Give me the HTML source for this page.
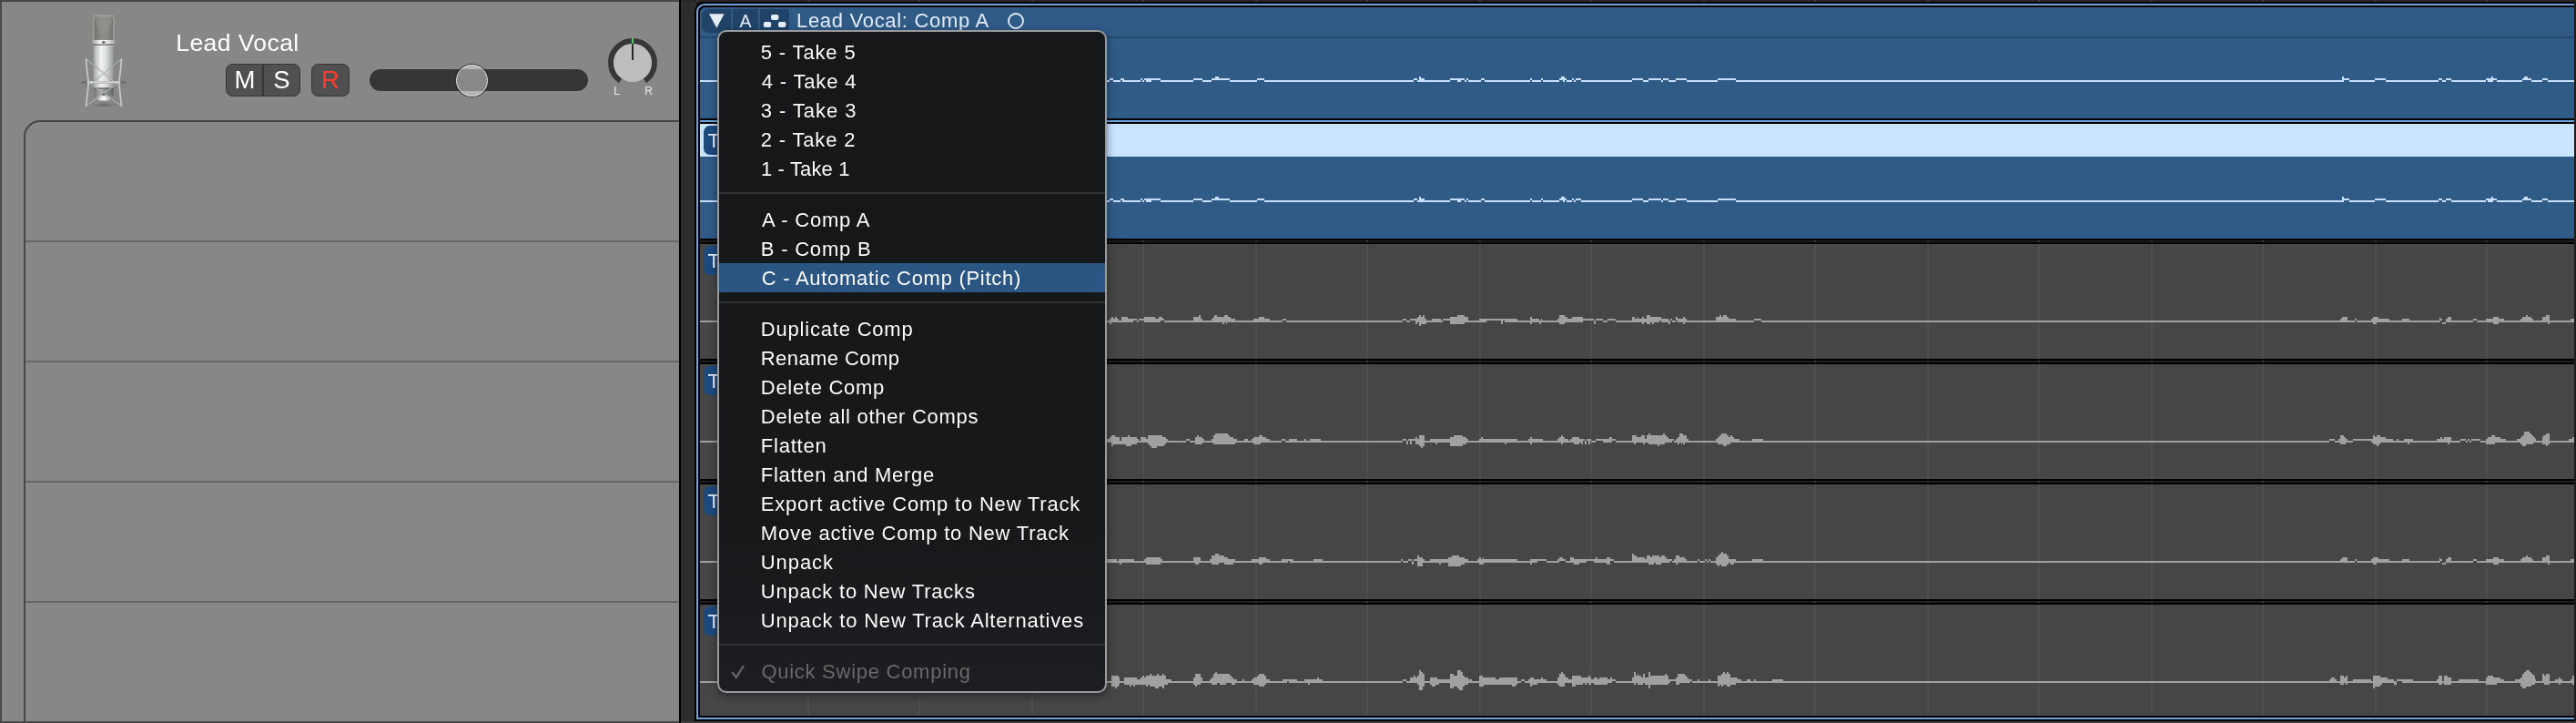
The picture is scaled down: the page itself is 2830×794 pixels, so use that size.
<!DOCTYPE html>
<html lang="en">
<head>
<meta charset="utf-8">
<title>Lead Vocal: Comp A</title>
<style>
*{box-sizing:border-box;margin:0;padding:0}
html,body{width:2830px;height:794px;overflow:hidden;background:#1c1c1c}
body{position:relative;will-change:transform;font-family:"Liberation Sans","DejaVu Sans",sans-serif;color:#fff}
#left{position:absolute;left:0;top:0;width:746px;height:794px;background:#878787;overflow:hidden}
#left .edgeT{position:absolute;left:0;top:0;width:746px;height:2px;background:#484848}
#left .edgeL{position:absolute;left:0;top:0;width:2px;height:794px;background:#494949}
#left .edgeB{position:absolute;left:0;top:792px;width:746px;height:2px;background:#494949}
#box{position:absolute;left:26px;top:132px;width:760px;height:700px;border:2px solid #464646;border-radius:18px 0 0 0}
.hl{position:absolute;left:28px;width:718px;height:2px;background:#676767}
#name{position:absolute;left:193.3px;top:30px;font-size:26.5px;line-height:34px;letter-spacing:.42px;color:#fff;white-space:nowrap}
.btn{position:absolute;top:70px;height:36px;background:#505050;border:1.5px solid #363636;border-radius:7.5px;font-size:27.5px;line-height:34.4px;text-align:center;color:#fff}
#ms{left:248px;width:82px}
#ms span{position:absolute;top:0;height:33px;line-height:34.4px;text-align:center}
#ms .m{left:0;width:40px}
#ms .s{left:41px;width:39px}
#ms i{position:absolute;left:39px;top:-1px;width:2px;height:35px;background:#363636}
#rec{left:342px;width:42px;color:#ff3b30}
#track{position:absolute;left:406px;top:76px;width:240px;height:24px;border-radius:12px;background:#343734}
#thumb{position:absolute;left:500.5px;top:70.5px;width:35px;height:35px;border-radius:50%;border:1.5px solid #e2e2e2;box-shadow:0 0 0 1px rgba(45,45,45,.85);background:linear-gradient(#b5b5b5 0,#b5b5b5 4.5px,#868988 4.5px,#868988 28.5px,#b5b5b5 28.5px)}
#knob{position:absolute;left:664px;top:38px;width:62px;height:80px}
#mic{position:absolute;left:84px;top:12px;width:60px;height:112px}
#div{position:absolute;left:746px;top:0;width:19px;height:794px;background:#2c2c2c;border-left:2px solid #000}
#topstrip{position:absolute;left:748px;top:0;width:2082px;height:2px;background:#262626}
#botstrip{position:absolute;left:748px;top:792px;width:2082px;height:2px;background:#3a3a3a}
#sel{position:absolute;left:763px;top:2px;width:2065px;height:790px;background:#000;border-radius:11px 0 0 0}
#selb{position:absolute;left:765px;top:4px;width:2063px;height:786px;border:2px solid #6fa3dd;border-right:0;border-radius:9px 0 0 0}
#selm{position:absolute;left:769px;top:132px;width:2059px;height:2px;background:#6fa3dd}
.row{position:absolute;left:769px;width:2059px;overflow:hidden}
.blue{background:#305b87}
.gray{background:#464646}
.sepd{position:absolute;left:769px;width:2059px;height:2px;background:#1e1e1e}
.tb{position:absolute;left:4px;top:2px;width:40px;height:32px;border-radius:7px;background:#1c4a7e;color:#e9f1fb;font-size:22px;line-height:33.6px;padding-left:4.6px;overflow:hidden}
.row svg{position:absolute;left:0;top:0}
#hdr{position:absolute;left:0;top:0;width:100%;height:32px}
#hsep{position:absolute;left:0;top:32px;width:100%;height:2px;background:#28496d}
#grp{position:absolute;left:2px;top:2px;width:96px;height:26px;background:#204367;border-radius:8px 3px 3px 8px}
#grp i{position:absolute;top:0;width:2px;height:26px;background:#2f5a87}
#title{position:absolute;left:106px;top:0;height:32px;line-height:29px;font-size:22px;letter-spacing:.7px;color:#e3edf9;white-space:nowrap}
#ga{position:absolute;left:34px;top:0;width:28px;text-align:center;font-size:19.5px;line-height:27px;color:#e3edf9}
#pale{position:absolute;left:0;top:0;width:100%;height:36px;background:#c9e4ff}
#menu{position:absolute;left:788px;top:33px;width:428px;height:728px;border:2px solid #979a9f;border-radius:10px;background:linear-gradient(#161718 0,#17181a 75%,#1c1e21 100%);overflow:hidden;font-size:22px;letter-spacing:.8px;color:#fbfbfb;box-shadow:0 3px 10px rgba(0,0,0,.45)}
#menu .it{position:absolute;left:0;width:424px;height:32px;line-height:34px;padding-left:46px;white-space:nowrap}
#menu .sep{position:absolute;left:0;width:424px;height:2px;background:#303133}
#menu .hi{background:#2b5583}
#menu .dis{color:#696969}
#menu svg{position:absolute}
</style>
</head>
<body>
<div id="left">
<div id="box"></div>
<div class="hl" style="top:264px"></div>
<div class="hl" style="top:396px"></div>
<div class="hl" style="top:528px"></div>
<div class="hl" style="top:660px"></div>
<div class="edgeT"></div><div class="edgeL"></div><div class="edgeB"></div>
<svg id="mic" width="60" height="112" viewBox="84 12 60 112">
<defs>
<linearGradient id="mg1" x1="0" y1="0" x2="1" y2="0"><stop offset="0" stop-color="#858a85"/><stop offset=".12" stop-color="#b9beb9"/><stop offset=".38" stop-color="#f1f4f1"/><stop offset=".62" stop-color="#d9ddd9"/><stop offset=".88" stop-color="#a3a8a3"/><stop offset="1" stop-color="#7f847f"/></linearGradient>
<linearGradient id="mg2" x1="0" y1="0" x2="1" y2="0"><stop offset="0" stop-color="#73736e"/><stop offset=".3" stop-color="#878781"/><stop offset=".5" stop-color="#8d8d87"/><stop offset=".7" stop-color="#878781"/><stop offset="1" stop-color="#747470"/></linearGradient>
<linearGradient id="mg3" x1="0" y1="0" x2="1" y2="0"><stop offset="0" stop-color="#9ea39e"/><stop offset=".3" stop-color="#e9ece9"/><stop offset=".55" stop-color="#f6f8f6"/><stop offset="1" stop-color="#a9aea9"/></linearGradient>
<linearGradient id="mg4" x1="0" y1="0" x2="1" y2="0"><stop offset="0" stop-color="#6f746f"/><stop offset=".35" stop-color="#aeb3ae"/><stop offset=".6" stop-color="#8e938e"/><stop offset="1" stop-color="#646964"/></linearGradient>
<radialGradient id="msh" cx=".5" cy=".5" r=".5"><stop offset="0" stop-color="#5f5f5f" stop-opacity=".9"/><stop offset="1" stop-color="#6a6a6a" stop-opacity="0"/></radialGradient>
</defs>
<ellipse cx="114" cy="115.4" rx="14" ry="2.6" fill="url(#msh)"/>
<rect x="101.8" y="50" width="24.2" height="46.5" fill="url(#mg1)"/>
<path d="M103.2 96.5h21.6v6.5q0 2.5-2.5 2.5h-16.6q-2.5 0-2.5-2.5z" fill="url(#mg4)"/>
<rect x="103.2" y="96.5" width="21.6" height="1.4" fill="#4d524d" opacity=".6"/>
<path d="M106.5 105.3h14.4v3.2q0 2-2 2h-10.4q-2 0-2-2z" fill="url(#mg3)"/>
<rect x="102.9" y="17.2" width="22" height="27.2" rx="1.4" fill="url(#mg2)" stroke="#c4c4bc" stroke-opacity=".75" stroke-width=".9"/>
<path d="M103.4 18l5.4 18h10l5.4-18z" fill="#94948d" opacity=".5"/>
<rect x="101.2" y="44" width="24.8" height="6.8" rx="1" fill="url(#mg3)"/>
<rect x="101.6" y="48.6" width="24" height="1" fill="#3c403c"/>
<ellipse cx="113.8" cy="46.4" rx="1.8" ry="1.2" fill="#4a4e52"/>
<g fill="none" stroke-linecap="round">
<path d="M94.6 64.8L125.5 90M133.4 64.8L102.5 90" stroke="#5d615d" stroke-width="2" opacity=".35"/><path d="M94.6 64.8L125.5 90M133.4 64.8L102.5 90" stroke="#d0d4d0" stroke-width="1" opacity=".9"/>
<path d="M97.6 90.8L133.4 116.4M130.4 90.8L94.6 116.4" stroke="#5d615d" stroke-width="2" opacity=".35"/><path d="M97.6 90.8L133.4 116.4M130.4 90.8L94.6 116.4" stroke="#d0d4d0" stroke-width="1" opacity=".9"/>
<path d="M90.8 90.4H137.2" stroke="#6d6f6d" stroke-width="2.6"/>
<path d="M96.5 90.4H131.5" stroke="#d9ddd9" stroke-width="2.2"/>
<path d="M94.6 64.8Q95.2 78 97.4 90.4Q96 104 94.6 116.4" stroke="#c6cac6" stroke-width="1.7"/>
<path d="M133.4 64.8Q132.8 78 130.6 90.4Q132 104 133.4 116.4" stroke="#c6cac6" stroke-width="1.7"/>
</g>
<circle cx="113.9" cy="103.6" r="1.2" fill="#4a4e4a"/>
</svg>

<div id="name">Lead Vocal</div>
<div class="btn" id="ms"><span class="m">M</span><i></i><span class="s">S</span></div>
<div class="btn" id="rec">R</div>
<div id="track"></div>
<div id="thumb"></div>
<svg id="knob" viewBox="0 0 62 80" width="62" height="80">
<path d="M17.5 50.8A24 24 0 1 1 44.5 50.8" fill="none" stroke="#373737" stroke-width="6"/>
<circle cx="31" cy="31" r="21" fill="#bdbdbd"/>
<rect x="30" y="8" width="2" height="20" fill="#2a2a2a"/>
<rect x="30" y="4" width="2" height="6" fill="#3bd15a"/>
<text x="10.2" y="65.8" font-size="12" fill="#ececec">L</text>
<text x="44.2" y="65.8" font-size="12" fill="#ececec">R</text>
</svg>
</div>
<div id="div"></div>
<div id="topstrip"></div>
<div id="botstrip"></div>
<div id="sel"></div>
<div id="selb"></div>
<div class="row blue" style="top:8px;height:122px;border-radius:6px 0 0 0"><svg width="2059" height="122" viewBox="0 0 2059 122" shape-rendering="crispEdges"><path fill="#c6dffc" d="M0 80h450v2h-450zM450 78h4v2h-4zM454 80h8v2h-8zM462 78h2v2h-2zM464 78h2v4h-2zM466 80h18v2h-18zM484 78h2v2h-2zM486 80h2v2h-2zM488 78h2v2h-2zM490 78h6v4h-6zM496 78h10v2h-10zM506 80h36v2h-36zM542 78h10v2h-10zM552 80h10v2h-10zM562 78h4v2h-4zM566 76h4v4h-4zM570 78h12v2h-12zM582 80h30v2h-30zM612 78h8v2h-8zM620 80h164v2h-164zM784 78h4v2h-4zM788 80h2v2h-2zM790 76h2v6h-2zM792 78h4v4h-4zM796 80h28v2h-28zM824 78h8v2h-8zM832 78h4v4h-4zM836 78h4v2h-4zM840 80h2v2h-2zM842 78h2v2h-2zM844 80h14v2h-14zM858 78h4v2h-4zM862 80h50v2h-50zM912 78h2v2h-2zM914 80h10v2h-10zM924 78h2v2h-2zM926 80h18v2h-18zM944 78h2v2h-2zM946 76h2v4h-2zM948 76h2v6h-2zM950 78h2v2h-2zM952 80h6v2h-6zM958 78h2v2h-2zM960 80h2v2h-2zM962 78h6v2h-6zM968 80h56v2h-56zM1024 78h12v2h-12zM1036 80h6v2h-6zM1042 78h14v2h-14zM1056 80h2v2h-2zM1058 78h6v2h-6zM1064 80h8v2h-8zM1072 78h12v2h-12zM1084 80h34v2h-34zM1118 78h20v2h-20zM1138 80h666v2h-666zM1804 76h2v6h-2zM1806 78h6v2h-6zM1812 80h28v2h-28zM1840 78h12v2h-12zM1852 80h58v2h-58zM1910 78h4v2h-4zM1914 80h4v2h-4zM1918 78h6v2h-6zM1924 80h38v2h-38zM1962 78h2v2h-2zM1964 78h4v4h-4zM1968 76h2v6h-2zM1970 78h4v2h-4zM1974 80h28v2h-28zM2002 78h2v2h-2zM2004 76h4v4h-4zM2008 78h4v2h-4zM2012 80h12v2h-12zM2024 78h6v2h-6zM2030 80h29v2h-29z"/></svg>
<div id="hdr"><div id="grp"><i style="left:32px"></i><i style="left:62px"></i>
<svg width="96" height="30" viewBox="0 0 96 30" style="position:absolute;left:0;top:0"><path fill="#e6eef9" d="M8 5.2h16.6l-8.3 15.6z"/><rect x="76" y="6" width="8.4" height="6" rx="2" fill="#e6eef9"/><rect x="67.8" y="14" width="8.4" height="6" rx="2" fill="#e6eef9"/><rect x="84" y="14" width="8.4" height="6" rx="2" fill="#e6eef9"/></svg>
<div id="ga">A</div></div>
<div id="title">Lead Vocal: Comp A</div>
<svg width="24" height="24" viewBox="0 0 24 24" style="position:absolute;left:335px;top:3px"><circle cx="12" cy="12" r="8" fill="none" stroke="#e3edf9" stroke-width="1.8"/></svg>
</div><div id="hsep"></div></div>
<div id="selm"></div>
<div class="row blue" style="top:136px;height:126px"><svg width="2059" height="126" viewBox="0 0 2059 126" shape-rendering="crispEdges"><path fill="#c6dffc" d="M0 84h450v2h-450zM450 82h4v2h-4zM454 84h8v2h-8zM462 82h2v2h-2zM464 82h2v4h-2zM466 84h18v2h-18zM484 82h2v2h-2zM486 84h2v2h-2zM488 82h2v2h-2zM490 82h6v4h-6zM496 82h10v2h-10zM506 84h36v2h-36zM542 82h10v2h-10zM552 84h10v2h-10zM562 82h4v2h-4zM566 80h4v4h-4zM570 82h12v2h-12zM582 84h30v2h-30zM612 82h8v2h-8zM620 84h164v2h-164zM784 82h4v2h-4zM788 84h2v2h-2zM790 80h2v6h-2zM792 82h4v4h-4zM796 84h28v2h-28zM824 82h8v2h-8zM832 82h4v4h-4zM836 82h4v2h-4zM840 84h2v2h-2zM842 82h2v2h-2zM844 84h14v2h-14zM858 82h4v2h-4zM862 84h50v2h-50zM912 82h2v2h-2zM914 84h10v2h-10zM924 82h2v2h-2zM926 84h18v2h-18zM944 82h2v2h-2zM946 80h2v4h-2zM948 80h2v6h-2zM950 82h2v2h-2zM952 84h6v2h-6zM958 82h2v2h-2zM960 84h2v2h-2zM962 82h6v2h-6zM968 84h56v2h-56zM1024 82h12v2h-12zM1036 84h6v2h-6zM1042 82h14v2h-14zM1056 84h2v2h-2zM1058 82h6v2h-6zM1064 84h8v2h-8zM1072 82h12v2h-12zM1084 84h34v2h-34zM1118 82h20v2h-20zM1138 84h666v2h-666zM1804 80h2v6h-2zM1806 82h6v2h-6zM1812 84h28v2h-28zM1840 82h12v2h-12zM1852 84h58v2h-58zM1910 82h4v2h-4zM1914 84h4v2h-4zM1918 82h6v2h-6zM1924 84h38v2h-38zM1962 82h2v2h-2zM1964 82h4v4h-4zM1968 80h2v6h-2zM1970 82h4v2h-4zM1974 84h28v2h-28zM2002 82h2v2h-2zM2004 80h4v4h-4zM2008 82h4v2h-4zM2012 84h12v2h-12zM2024 82h6v2h-6zM2030 84h29v2h-29z"/></svg><div id="pale"></div><div class="tb">T</div></div>
<div class="sepd" style="top:264px"></div>
<div class="row gray" style="top:268px;height:126px"><svg width="2059" height="126" viewBox="0 0 2059 126" shape-rendering="crispEdges"><path fill="#4e4e4e" d="M118 0h2v126h-2zM240 0h2v126h-2zM364 0h2v126h-2zM486 0h2v126h-2zM610 0h2v126h-2zM732 0h2v126h-2zM856 0h2v126h-2zM978 0h2v126h-2zM1102 0h2v126h-2zM1224 0h2v126h-2zM1348 0h2v126h-2zM1470 0h2v126h-2zM1594 0h2v126h-2zM1716 0h2v126h-2zM1840 0h2v126h-2zM1962 0h2v126h-2z"/><path fill="#a0a0a0" d="M0 84h450v2h-450zM450 82h2v6h-2zM452 80h2v6h-2zM454 82h2v4h-2zM456 80h2v6h-2zM458 82h2v4h-2zM460 84h3v2h-3zM463 80h7v6h-7zM470 82h6v4h-6zM476 82h4v2h-4zM480 84h2v2h-2zM482 82h6v2h-6zM488 80h12v6h-12zM500 82h4v4h-4zM504 80h2v6h-2zM506 80h2v4h-2zM508 82h2v2h-2zM510 84h32v2h-32zM542 80h6v6h-6zM548 78h2v8h-2zM550 82h2v4h-2zM552 84h10v2h-10zM562 82h2v4h-2zM564 80h1v6h-1zM565 78h3v8h-3zM568 80h6v6h-6zM574 80h2v8h-2zM576 78h2v8h-2zM578 78h1v10h-1zM579 78h1v8h-1zM580 80h3v6h-3zM583 82h5v4h-5zM588 84h20v2h-20zM608 82h6v4h-6zM614 80h6v6h-6zM620 82h6v4h-6zM626 84h14v2h-14zM640 82h4v2h-4zM644 84h128v2h-128zM772 82h4v2h-4zM776 84h4v2h-4zM780 82h6v2h-6zM786 82h2v6h-2zM788 80h2v6h-2zM790 78h2v12h-2zM792 80h2v8h-2zM794 78h2v10h-2zM796 82h2v6h-2zM798 84h6v2h-6zM804 82h10v4h-10zM814 84h2v2h-2zM816 82h8v2h-8zM824 80h8v8h-8zM832 78h8v10h-8zM840 80h4v6h-4zM844 84h12v2h-12zM856 82h8v4h-8zM864 82h16v2h-16zM880 82h2v6h-2zM882 82h2v2h-2zM884 82h14v4h-14zM898 84h14v2h-14zM912 80h2v8h-2zM914 82h8v4h-8zM922 84h2v4h-2zM924 82h1v4h-1zM925 84h17v2h-17zM942 82h2v4h-2zM944 78h6v10h-6zM950 80h3v6h-3zM953 82h5v4h-5zM958 80h12v6h-12zM970 82h12v2h-12zM982 84h2v4h-2zM984 82h8v2h-8zM992 84h5v2h-5zM997 82h9v2h-9zM1006 84h18v2h-18zM1024 80h3v6h-3zM1027 82h3v4h-3zM1030 80h1v6h-1zM1031 82h4v4h-4zM1035 80h2v8h-2zM1037 82h3v4h-3zM1040 78h4v10h-4zM1044 80h2v6h-2zM1046 80h2v8h-2zM1048 80h6v6h-6zM1054 80h2v4h-2zM1056 82h8v4h-8zM1064 84h2v4h-2zM1066 82h2v2h-2zM1068 84h4v2h-4zM1072 80h2v4h-2zM1074 82h6v4h-6zM1080 80h2v8h-2zM1082 82h2v4h-2zM1084 84h32v2h-32zM1116 80h4v6h-4zM1120 78h2v8h-2zM1122 80h2v6h-2zM1124 78h4v8h-4zM1128 80h2v6h-2zM1130 82h8v4h-8zM1138 84h20v2h-20zM1158 82h8v2h-8zM1166 84h636v2h-636zM1802 82h2v4h-2zM1804 80h6v6h-6zM1810 84h8v2h-8zM1818 82h2v2h-2zM1820 84h16v2h-16zM1836 82h2v4h-2zM1838 80h4v8h-4zM1842 80h2v6h-2zM1844 82h12v4h-12zM1856 84h14v2h-14zM1870 82h8v4h-8zM1878 84h33v2h-33zM1911 80h1v6h-1zM1912 82h2v2h-2zM1914 86h4v2h-4zM1918 82h2v4h-2zM1920 80h4v6h-4zM1924 84h24v2h-24zM1948 82h4v2h-4zM1952 84h10v2h-10zM1962 82h8v4h-8zM1970 80h6v8h-6zM1976 82h6v4h-6zM1982 84h18v2h-18zM2000 82h2v4h-2zM2002 80h4v6h-4zM2006 78h2v8h-2zM2008 80h4v6h-4zM2012 82h2v4h-2zM2014 84h10v2h-10zM2024 80h4v6h-4zM2028 78h2v8h-2zM2030 78h2v10h-2zM2032 84h23v2h-23zM2055 82h4v4h-4z"/></svg><div class="tb">T</div></div>
<div class="sepd" style="top:396px"></div>
<div class="row gray" style="top:400px;height:126px"><svg width="2059" height="126" viewBox="0 0 2059 126" shape-rendering="crispEdges"><path fill="#4e4e4e" d="M118 0h2v126h-2zM240 0h2v126h-2zM364 0h2v126h-2zM486 0h2v126h-2zM610 0h2v126h-2zM732 0h2v126h-2zM856 0h2v126h-2zM978 0h2v126h-2zM1102 0h2v126h-2zM1224 0h2v126h-2zM1348 0h2v126h-2zM1470 0h2v126h-2zM1594 0h2v126h-2zM1716 0h2v126h-2zM1840 0h2v126h-2zM1962 0h2v126h-2z"/><path fill="#a0a0a0" d="M0 84h447v2h-447zM447 82h3v4h-3zM450 80h2v6h-2zM452 78h2v12h-2zM454 78h2v10h-2zM456 80h5v8h-5zM461 84h2v4h-2zM463 80h5v8h-5zM468 80h2v10h-2zM470 78h2v12h-2zM472 80h2v10h-2zM474 80h6v8h-6zM480 82h2v4h-2zM482 84h2v2h-2zM484 80h6v6h-6zM490 82h2v4h-2zM492 78h2v10h-2zM494 78h2v12h-2zM496 78h6v14h-6zM502 78h6v12h-6zM508 80h2v10h-2zM510 80h2v8h-2zM512 82h2v4h-2zM514 84h20v2h-20zM534 82h4v2h-4zM538 84h6v2h-6zM544 80h2v8h-2zM546 78h2v10h-2zM548 80h4v8h-4zM552 82h2v4h-2zM554 84h8v2h-8zM562 82h2v4h-2zM564 78h2v10h-2zM566 76h14v12h-14zM580 78h2v10h-2zM582 80h4v8h-4zM586 82h2v6h-2zM588 82h2v4h-2zM590 84h8v2h-8zM598 82h4v4h-4zM602 84h4v2h-4zM606 82h2v4h-2zM608 80h6v8h-6zM614 78h2v10h-2zM616 78h2v8h-2zM618 80h4v6h-4zM622 82h4v4h-4zM626 84h13v2h-13zM639 82h4v2h-4zM643 84h4v2h-4zM647 82h9v4h-9zM656 84h8v2h-8zM664 82h2v4h-2zM666 84h4v2h-4zM670 82h12v4h-12zM682 84h90v2h-90zM772 82h4v2h-4zM776 84h2v4h-2zM778 82h2v2h-2zM780 82h2v6h-2zM782 82h4v2h-4zM786 80h2v8h-2zM788 82h2v6h-2zM790 78h2v12h-2zM792 78h2v14h-2zM794 78h2v12h-2zM796 84h6v2h-6zM802 82h6v4h-6zM808 82h2v6h-2zM810 82h14v4h-14zM824 80h4v10h-4zM828 78h10v12h-10zM838 80h4v8h-4zM842 82h2v4h-2zM844 84h12v2h-12zM856 82h2v4h-2zM858 80h2v6h-2zM860 82h24v4h-24zM884 82h2v6h-2zM886 82h12v4h-12zM898 84h12v2h-12zM910 82h2v4h-2zM912 80h2v8h-2zM914 82h12v4h-12zM926 84h16v2h-16zM942 82h2v4h-2zM944 80h2v6h-2zM946 78h2v10h-2zM948 80h2v6h-2zM950 82h4v4h-4zM954 84h2v2h-2zM956 82h2v4h-2zM958 80h2v6h-2zM960 80h6v8h-6zM966 82h2v4h-2zM968 82h2v6h-2zM970 82h2v2h-2zM972 84h2v4h-2zM974 82h2v2h-2zM976 82h2v6h-2zM978 82h1v2h-1zM979 84h5v2h-5zM984 82h8v2h-8zM992 82h7v4h-7zM999 80h3v6h-3zM1002 82h4v2h-4zM1006 84h18v2h-18zM1024 78h2v8h-2zM1026 78h2v10h-2zM1028 78h1v8h-1zM1029 80h5v6h-5zM1034 78h2v8h-2zM1036 78h2v10h-2zM1038 82h2v4h-2zM1040 78h2v8h-2zM1042 76h2v12h-2zM1044 78h8v10h-8zM1052 78h2v12h-2zM1054 78h4v10h-4zM1058 76h2v12h-2zM1060 78h2v8h-2zM1062 80h2v6h-2zM1064 82h4v4h-4zM1068 82h2v2h-2zM1070 84h2v2h-2zM1072 82h2v4h-2zM1074 80h2v8h-2zM1076 76h2v10h-2zM1078 76h1v12h-1zM1079 76h1v10h-1zM1080 78h2v10h-2zM1082 78h2v8h-2zM1084 82h2v4h-2zM1086 84h30v2h-30zM1116 82h2v4h-2zM1118 80h2v8h-2zM1120 78h2v10h-2zM1122 76h2v12h-2zM1124 76h4v14h-4zM1128 78h2v10h-2zM1130 80h2v8h-2zM1132 78h2v8h-2zM1134 80h2v6h-2zM1136 82h6v4h-6zM1142 84h14v2h-14zM1156 82h12v4h-12zM1168 84h622v2h-622zM1790 82h6v2h-6zM1796 84h4v2h-4zM1800 82h2v4h-2zM1802 78h4v10h-4zM1806 80h2v8h-2zM1808 82h2v4h-2zM1810 84h6v2h-6zM1816 82h20v2h-20zM1836 82h2v4h-2zM1838 78h2v10h-2zM1840 80h2v8h-2zM1842 78h2v12h-2zM1844 78h2v10h-2zM1846 80h6v6h-6zM1852 82h8v4h-8zM1860 84h4v2h-4zM1864 82h2v4h-2zM1866 84h6v2h-6zM1872 82h4v4h-4zM1876 82h2v6h-2zM1878 82h4v4h-4zM1882 84h26v2h-26zM1908 82h4v4h-4zM1912 80h2v6h-2zM1914 82h2v4h-2zM1916 80h4v6h-4zM1920 80h2v8h-2zM1922 80h2v6h-2zM1924 84h10v2h-10zM1934 82h6v2h-6zM1940 84h2v2h-2zM1942 82h2v2h-2zM1944 84h2v2h-2zM1946 82h10v2h-10zM1956 84h6v2h-6zM1962 82h2v6h-2zM1964 80h4v8h-4zM1968 78h4v10h-4zM1972 80h6v6h-6zM1978 82h6v4h-6zM1984 84h12v2h-12zM1996 82h4v4h-4zM2000 80h2v8h-2zM2002 78h2v12h-2zM2004 74h2v16h-2zM2006 74h4v14h-4zM2010 76h2v12h-2zM2012 78h2v10h-2zM2014 80h2v6h-2zM2016 82h1v4h-1zM2017 84h7v2h-7zM2024 80h1v8h-1zM2025 78h3v10h-3zM2028 76h2v14h-2zM2030 76h2v12h-2zM2032 84h21v2h-21zM2053 82h4v4h-4zM2057 80h2v6h-2z"/></svg><div class="tb">T</div></div>
<div class="sepd" style="top:528px"></div>
<div class="row gray" style="top:532px;height:126px"><svg width="2059" height="126" viewBox="0 0 2059 126" shape-rendering="crispEdges"><path fill="#4e4e4e" d="M118 0h2v126h-2zM240 0h2v126h-2zM364 0h2v126h-2zM486 0h2v126h-2zM610 0h2v126h-2zM732 0h2v126h-2zM856 0h2v126h-2zM978 0h2v126h-2zM1102 0h2v126h-2zM1224 0h2v126h-2zM1348 0h2v126h-2zM1470 0h2v126h-2zM1594 0h2v126h-2zM1716 0h2v126h-2zM1840 0h2v126h-2zM1962 0h2v126h-2z"/><path fill="#a0a0a0" d="M0 84h447v2h-447zM447 82h11v4h-11zM458 84h2v2h-2zM460 82h1v4h-1zM461 82h2v6h-2zM463 82h14v4h-14zM477 84h11v2h-11zM488 82h2v4h-2zM490 80h16v8h-16zM506 82h2v4h-2zM508 84h34v2h-34zM542 80h2v6h-2zM544 80h4v8h-4zM548 80h2v6h-2zM550 84h10v2h-10zM560 82h2v4h-2zM562 78h4v10h-4zM566 76h4v12h-4zM570 78h6v8h-6zM576 80h4v8h-4zM580 82h6v6h-6zM586 82h2v4h-2zM588 84h18v2h-18zM606 82h8v4h-8zM614 80h4v8h-4zM618 80h4v6h-4zM622 82h4v4h-4zM626 84h13v2h-13zM639 82h7v4h-7zM646 82h2v2h-2zM648 82h4v4h-4zM652 84h22v2h-22zM674 82h10v4h-10zM684 84h86v2h-86zM770 82h2v2h-2zM772 84h6v2h-6zM778 82h4v2h-4zM782 84h2v4h-2zM784 82h4v2h-4zM788 78h2v12h-2zM790 80h4v10h-4zM794 82h2v4h-2zM796 84h6v2h-6zM802 82h10v4h-10zM812 82h2v6h-2zM814 82h8v4h-8zM822 80h4v10h-4zM826 78h8v12h-8zM834 80h2v10h-2zM836 80h4v8h-4zM840 82h4v4h-4zM844 84h10v2h-10zM854 82h2v4h-2zM856 80h2v8h-2zM858 82h2v6h-2zM860 80h1v8h-1zM861 82h37v4h-37zM898 84h14v2h-14zM912 82h2v6h-2zM914 82h6v4h-6zM920 82h10v2h-10zM930 84h12v2h-12zM942 82h2v4h-2zM944 80h4v4h-4zM948 82h3v2h-3zM951 84h5v2h-5zM956 80h4v6h-4zM960 82h6v6h-6zM966 82h8v4h-8zM974 82h8v2h-8zM982 82h2v4h-2zM984 80h2v6h-2zM986 82h10v4h-10zM996 80h4v8h-4zM1000 82h4v2h-4zM1004 84h20v2h-20zM1024 76h2v10h-2zM1026 78h3v8h-3zM1029 80h9v6h-9zM1038 82h2v4h-2zM1040 78h2v8h-2zM1042 78h2v10h-2zM1044 80h2v8h-2zM1046 78h2v10h-2zM1048 78h2v8h-2zM1050 78h4v10h-4zM1054 80h2v8h-2zM1056 78h4v8h-4zM1060 80h2v6h-2zM1062 82h4v4h-4zM1066 82h2v2h-2zM1068 84h2v2h-2zM1070 82h2v4h-2zM1072 78h2v10h-2zM1074 78h2v8h-2zM1076 80h6v6h-6zM1082 82h2v4h-2zM1084 84h12v2h-12zM1096 82h2v2h-2zM1098 84h6v2h-6zM1104 82h2v2h-2zM1106 84h2v2h-2zM1108 82h2v2h-2zM1110 84h6v2h-6zM1116 80h2v8h-2zM1118 78h2v12h-2zM1120 76h2v12h-2zM1122 74h2v16h-2zM1124 76h4v14h-4zM1128 78h2v10h-2zM1130 82h2v4h-2zM1132 82h4v6h-4zM1136 82h2v4h-2zM1138 84h18v2h-18zM1156 82h12v4h-12zM1168 84h634v2h-634zM1802 82h2v4h-2zM1804 80h6v6h-6zM1810 84h8v2h-8zM1818 82h2v2h-2zM1820 84h16v2h-16zM1836 82h2v4h-2zM1838 80h4v8h-4zM1842 80h2v6h-2zM1844 82h12v4h-12zM1856 84h14v2h-14zM1870 82h8v4h-8zM1878 84h33v2h-33zM1911 80h1v6h-1zM1912 82h2v2h-2zM1914 86h4v2h-4zM1918 82h2v4h-2zM1920 80h4v6h-4zM1924 84h24v2h-24zM1948 82h4v2h-4zM1952 84h10v2h-10zM1962 82h8v4h-8zM1970 80h6v8h-6zM1976 82h6v4h-6zM1982 84h18v2h-18zM2000 82h2v4h-2zM2002 80h4v6h-4zM2006 78h2v8h-2zM2008 80h4v6h-4zM2012 82h2v4h-2zM2014 84h10v2h-10zM2024 80h4v6h-4zM2028 78h2v8h-2zM2030 78h2v10h-2zM2032 84h23v2h-23zM2055 82h4v4h-4z"/></svg><div class="tb">T</div></div>
<div class="sepd" style="top:660px"></div>
<div class="row gray" style="top:664px;height:122px"><svg width="2059" height="122" viewBox="0 0 2059 122" shape-rendering="crispEdges"><path fill="#4e4e4e" d="M118 0h2v122h-2zM240 0h2v122h-2zM364 0h2v122h-2zM486 0h2v122h-2zM610 0h2v122h-2zM732 0h2v122h-2zM856 0h2v122h-2zM978 0h2v122h-2zM1102 0h2v122h-2zM1224 0h2v122h-2zM1348 0h2v122h-2zM1470 0h2v122h-2zM1594 0h2v122h-2zM1716 0h2v122h-2zM1840 0h2v122h-2zM1962 0h2v122h-2z"/><path fill="#a0a0a0" d="M0 84h452v2h-452zM452 78h4v12h-4zM456 78h2v14h-2zM458 78h2v12h-2zM460 80h1v8h-1zM461 84h5v2h-5zM466 80h6v8h-6zM472 80h2v10h-2zM474 80h2v8h-2zM476 80h2v10h-2zM478 80h2v8h-2zM480 82h4v6h-4zM484 80h2v8h-2zM486 78h2v10h-2zM488 80h2v8h-2zM490 78h2v12h-2zM492 78h2v10h-2zM494 76h2v14h-2zM496 78h4v12h-4zM500 78h2v14h-2zM502 76h2v16h-2zM504 78h4v12h-4zM508 76h2v16h-2zM510 78h2v10h-2zM512 82h2v6h-2zM514 82h4v4h-4zM518 84h24v2h-24zM542 80h2v8h-2zM544 76h2v14h-2zM546 76h4v12h-4zM550 80h2v6h-2zM552 84h8v2h-8zM560 82h2v4h-2zM562 80h2v8h-2zM564 76h2v12h-2zM566 74h2v14h-2zM568 76h3v10h-3zM571 76h7v12h-7zM578 76h4v10h-4zM582 78h2v8h-2zM584 80h2v8h-2zM586 82h2v6h-2zM588 82h2v4h-2zM590 84h6v2h-6zM596 82h2v4h-2zM598 84h8v2h-8zM606 82h2v4h-2zM608 80h4v8h-4zM612 78h2v10h-2zM614 76h6v14h-6zM620 78h2v10h-2zM622 82h4v4h-4zM626 84h14v2h-14zM640 82h5v4h-5zM645 82h2v2h-2zM647 82h9v4h-9zM656 84h8v2h-8zM664 82h4v4h-4zM668 82h2v6h-2zM670 82h8v4h-8zM678 80h2v6h-2zM680 82h4v4h-4zM684 84h88v2h-88zM772 82h4v2h-4zM776 84h4v2h-4zM780 80h4v6h-4zM784 78h2v8h-2zM786 80h2v6h-2zM788 78h2v10h-2zM790 72h2v22h-2zM792 74h2v20h-2zM794 76h2v14h-2zM796 84h6v2h-6zM802 80h2v8h-2zM804 80h4v10h-4zM808 80h2v8h-2zM810 82h2v6h-2zM812 82h12v4h-12zM824 76h4v16h-4zM828 78h4v12h-4zM832 72h2v20h-2zM834 72h2v22h-2zM836 74h2v20h-2zM838 78h2v12h-2zM840 80h4v8h-4zM844 82h4v4h-4zM848 84h8v2h-8zM856 78h4v12h-4zM860 80h1v10h-1zM861 80h13v8h-13zM874 82h4v6h-4zM878 80h14v8h-14zM892 80h4v10h-4zM896 80h2v8h-2zM898 84h4v2h-4zM902 82h4v2h-4zM906 84h4v2h-4zM910 82h2v4h-2zM912 80h2v10h-2zM914 80h2v8h-2zM916 82h4v6h-4zM920 82h4v4h-4zM924 80h2v6h-2zM926 82h4v4h-4zM930 84h12v2h-12zM942 80h2v8h-2zM944 76h2v14h-2zM946 74h2v16h-2zM948 76h2v14h-2zM950 78h1v8h-1zM951 80h3v6h-3zM954 82h4v4h-4zM958 78h4v12h-4zM962 78h6v10h-6zM968 80h2v8h-2zM970 80h2v6h-2zM972 80h2v8h-2zM974 80h2v6h-2zM976 78h2v10h-2zM978 80h1v8h-1zM979 82h3v4h-3zM982 80h4v8h-4zM986 82h2v6h-2zM988 80h9v8h-9zM997 82h3v4h-3zM1000 80h2v6h-2zM1002 82h4v2h-4zM1006 84h18v2h-18zM1024 80h2v6h-2zM1026 74h2v14h-2zM1028 78h2v8h-2zM1030 76h1v12h-1zM1031 78h3v10h-3zM1034 80h2v8h-2zM1036 76h2v10h-2zM1038 80h4v8h-4zM1042 74h2v18h-2zM1044 78h16v10h-16zM1060 76h2v12h-2zM1062 78h2v10h-2zM1064 82h2v4h-2zM1066 82h6v2h-6zM1072 80h2v8h-2zM1074 76h2v12h-2zM1076 76h6v10h-6zM1082 78h2v8h-2zM1084 80h2v6h-2zM1086 82h2v4h-2zM1088 82h2v2h-2zM1090 84h6v2h-6zM1096 82h2v4h-2zM1098 84h10v2h-10zM1108 82h2v4h-2zM1110 84h8v2h-8zM1118 78h2v12h-2zM1120 78h2v10h-2zM1122 76h2v14h-2zM1124 74h2v14h-2zM1126 76h2v12h-2zM1128 74h2v16h-2zM1130 76h2v14h-2zM1132 80h6v8h-6zM1138 80h2v6h-2zM1140 82h4v4h-4zM1144 84h6v2h-6zM1150 82h4v4h-4zM1154 84h4v2h-4zM1158 82h2v4h-2zM1160 84h18v2h-18zM1178 82h12v4h-12zM1190 84h600v2h-600zM1790 82h2v4h-2zM1792 80h4v6h-4zM1796 82h2v4h-2zM1798 84h4v2h-4zM1802 78h4v10h-4zM1806 80h2v6h-2zM1808 78h2v10h-2zM1810 84h6v2h-6zM1816 82h20v4h-20zM1836 84h2v2h-2zM1838 78h2v14h-2zM1840 78h6v12h-6zM1846 80h2v8h-2zM1848 80h6v6h-6zM1854 82h7v4h-7zM1861 84h3v4h-3zM1864 82h6v2h-6zM1870 82h12v4h-12zM1882 84h26v2h-26zM1908 82h2v4h-2zM1910 78h4v10h-4zM1914 84h2v2h-2zM1916 78h4v10h-4zM1920 80h4v8h-4zM1924 84h8v2h-8zM1932 82h22v4h-22zM1954 84h8v2h-8zM1962 80h2v8h-2zM1964 78h6v10h-6zM1970 80h4v8h-4zM1974 80h4v6h-4zM1978 82h4v4h-4zM1982 84h12v2h-12zM1994 82h6v4h-6zM2000 80h2v10h-2zM2002 76h2v16h-2zM2004 74h2v18h-2zM2006 72h4v18h-4zM2010 74h2v16h-2zM2012 76h2v12h-2zM2014 78h2v10h-2zM2016 82h1v4h-1zM2017 84h7v2h-7zM2024 76h2v10h-2zM2026 78h2v10h-2zM2028 76h4v12h-4zM2032 84h6v2h-6zM2038 82h4v4h-4zM2042 80h2v8h-2zM2044 82h2v4h-2zM2046 84h9v2h-9zM2055 82h2v4h-2zM2057 78h2v10h-2z"/></svg><div class="tb">T</div></div>
<svg width="2830" height="794" viewBox="0 0 2830 794" shape-rendering="crispEdges" style="position:absolute;left:0;top:0"><path fill="#3b3b3b" d="M765 0h2v2h-2zM887 0h2v2h-2zM1009 0h2v2h-2zM1133 0h2v2h-2zM1255 0h2v2h-2zM1379 0h2v2h-2zM1501 0h2v2h-2zM1625 0h2v2h-2zM1747 0h2v2h-2zM1871 0h2v2h-2zM1993 0h2v2h-2zM2117 0h2v2h-2zM2239 0h2v2h-2zM2363 0h2v2h-2zM2485 0h2v2h-2zM2609 0h2v2h-2zM2731 0h2v2h-2zM887 264h2v2h-2zM1009 264h2v2h-2zM1133 264h2v2h-2zM1255 264h2v2h-2zM1379 264h2v2h-2zM1501 264h2v2h-2zM1625 264h2v2h-2zM1747 264h2v2h-2zM1871 264h2v2h-2zM1993 264h2v2h-2zM2117 264h2v2h-2zM2239 264h2v2h-2zM2363 264h2v2h-2zM2485 264h2v2h-2zM2609 264h2v2h-2zM2731 264h2v2h-2zM887 396h2v2h-2zM1009 396h2v2h-2zM1133 396h2v2h-2zM1255 396h2v2h-2zM1379 396h2v2h-2zM1501 396h2v2h-2zM1625 396h2v2h-2zM1747 396h2v2h-2zM1871 396h2v2h-2zM1993 396h2v2h-2zM2117 396h2v2h-2zM2239 396h2v2h-2zM2363 396h2v2h-2zM2485 396h2v2h-2zM2609 396h2v2h-2zM2731 396h2v2h-2zM887 528h2v2h-2zM1009 528h2v2h-2zM1133 528h2v2h-2zM1255 528h2v2h-2zM1379 528h2v2h-2zM1501 528h2v2h-2zM1625 528h2v2h-2zM1747 528h2v2h-2zM1871 528h2v2h-2zM1993 528h2v2h-2zM2117 528h2v2h-2zM2239 528h2v2h-2zM2363 528h2v2h-2zM2485 528h2v2h-2zM2609 528h2v2h-2zM2731 528h2v2h-2zM887 660h2v2h-2zM1009 660h2v2h-2zM1133 660h2v2h-2zM1255 660h2v2h-2zM1379 660h2v2h-2zM1501 660h2v2h-2zM1625 660h2v2h-2zM1747 660h2v2h-2zM1871 660h2v2h-2zM1993 660h2v2h-2zM2117 660h2v2h-2zM2239 660h2v2h-2zM2363 660h2v2h-2zM2485 660h2v2h-2zM2609 660h2v2h-2zM2731 660h2v2h-2z"/></svg>
<div id="menu">
<div class="it" style="top:6px;letter-spacing:0.85px;padding-left:45.8px">5 - Take 5</div>
<div class="it" style="top:38px;letter-spacing:0.82px;padding-left:46.8px">4 - Take 4</div>
<div class="it" style="top:70px;letter-spacing:0.93px;padding-left:45.8px">3 - Take 3</div>
<div class="it" style="top:102px;letter-spacing:0.82px;padding-left:45.8px">2 - Take 2</div>
<div class="it" style="top:134px;letter-spacing:0.13px;padding-left:46.0px">1 - Take 1</div>
<div class="sep" style="top:176px"></div>
<div class="it" style="top:190px;letter-spacing:0.79px;padding-left:47.1px">A - Comp A</div>
<div class="it" style="top:222px;letter-spacing:0.79px;padding-left:45.8px">B - Comp B</div>
<div class="it hi" style="top:254px;letter-spacing:0.72px;padding-left:46.8px">C - Automatic Comp (Pitch)</div>
<div class="sep" style="top:296px"></div>
<div class="it" style="top:310px;letter-spacing:0.80px;padding-left:45.8px">Duplicate Comp</div>
<div class="it" style="top:342px;letter-spacing:0.42px;padding-left:45.8px">Rename Comp</div>
<div class="it" style="top:374px;letter-spacing:0.71px;padding-left:45.8px">Delete Comp</div>
<div class="it" style="top:406px;letter-spacing:0.71px;padding-left:45.8px">Delete all other Comps</div>
<div class="it" style="top:438px;letter-spacing:0.77px;padding-left:45.8px">Flatten</div>
<div class="it" style="top:470px;letter-spacing:0.75px;padding-left:45.8px">Flatten and Merge</div>
<div class="it" style="top:502px;letter-spacing:0.80px;padding-left:45.8px">Export active Comp to New Track</div>
<div class="it" style="top:534px;letter-spacing:0.77px;padding-left:45.8px">Move active Comp to New Track</div>
<div class="it" style="top:566px;letter-spacing:0.92px;padding-left:45.8px">Unpack</div>
<div class="it" style="top:598px;letter-spacing:0.79px;padding-left:45.8px">Unpack to New Tracks</div>
<div class="it" style="top:630px;letter-spacing:0.82px;padding-left:45.8px">Unpack to New Track Alternatives</div>
<div class="sep" style="top:672px"></div>
<svg width="20" height="20" viewBox="0 0 20 20" style="left:12px;top:691px"><path d="M2.3 12.3l4.6 5.6L15 5" fill="none" stroke="#686868" stroke-width="2.3"/></svg>
<div class="it dis" style="top:686px;letter-spacing:0.73px;padding-left:46.4px">Quick Swipe Comping</div>
</div>
</body>
</html>
